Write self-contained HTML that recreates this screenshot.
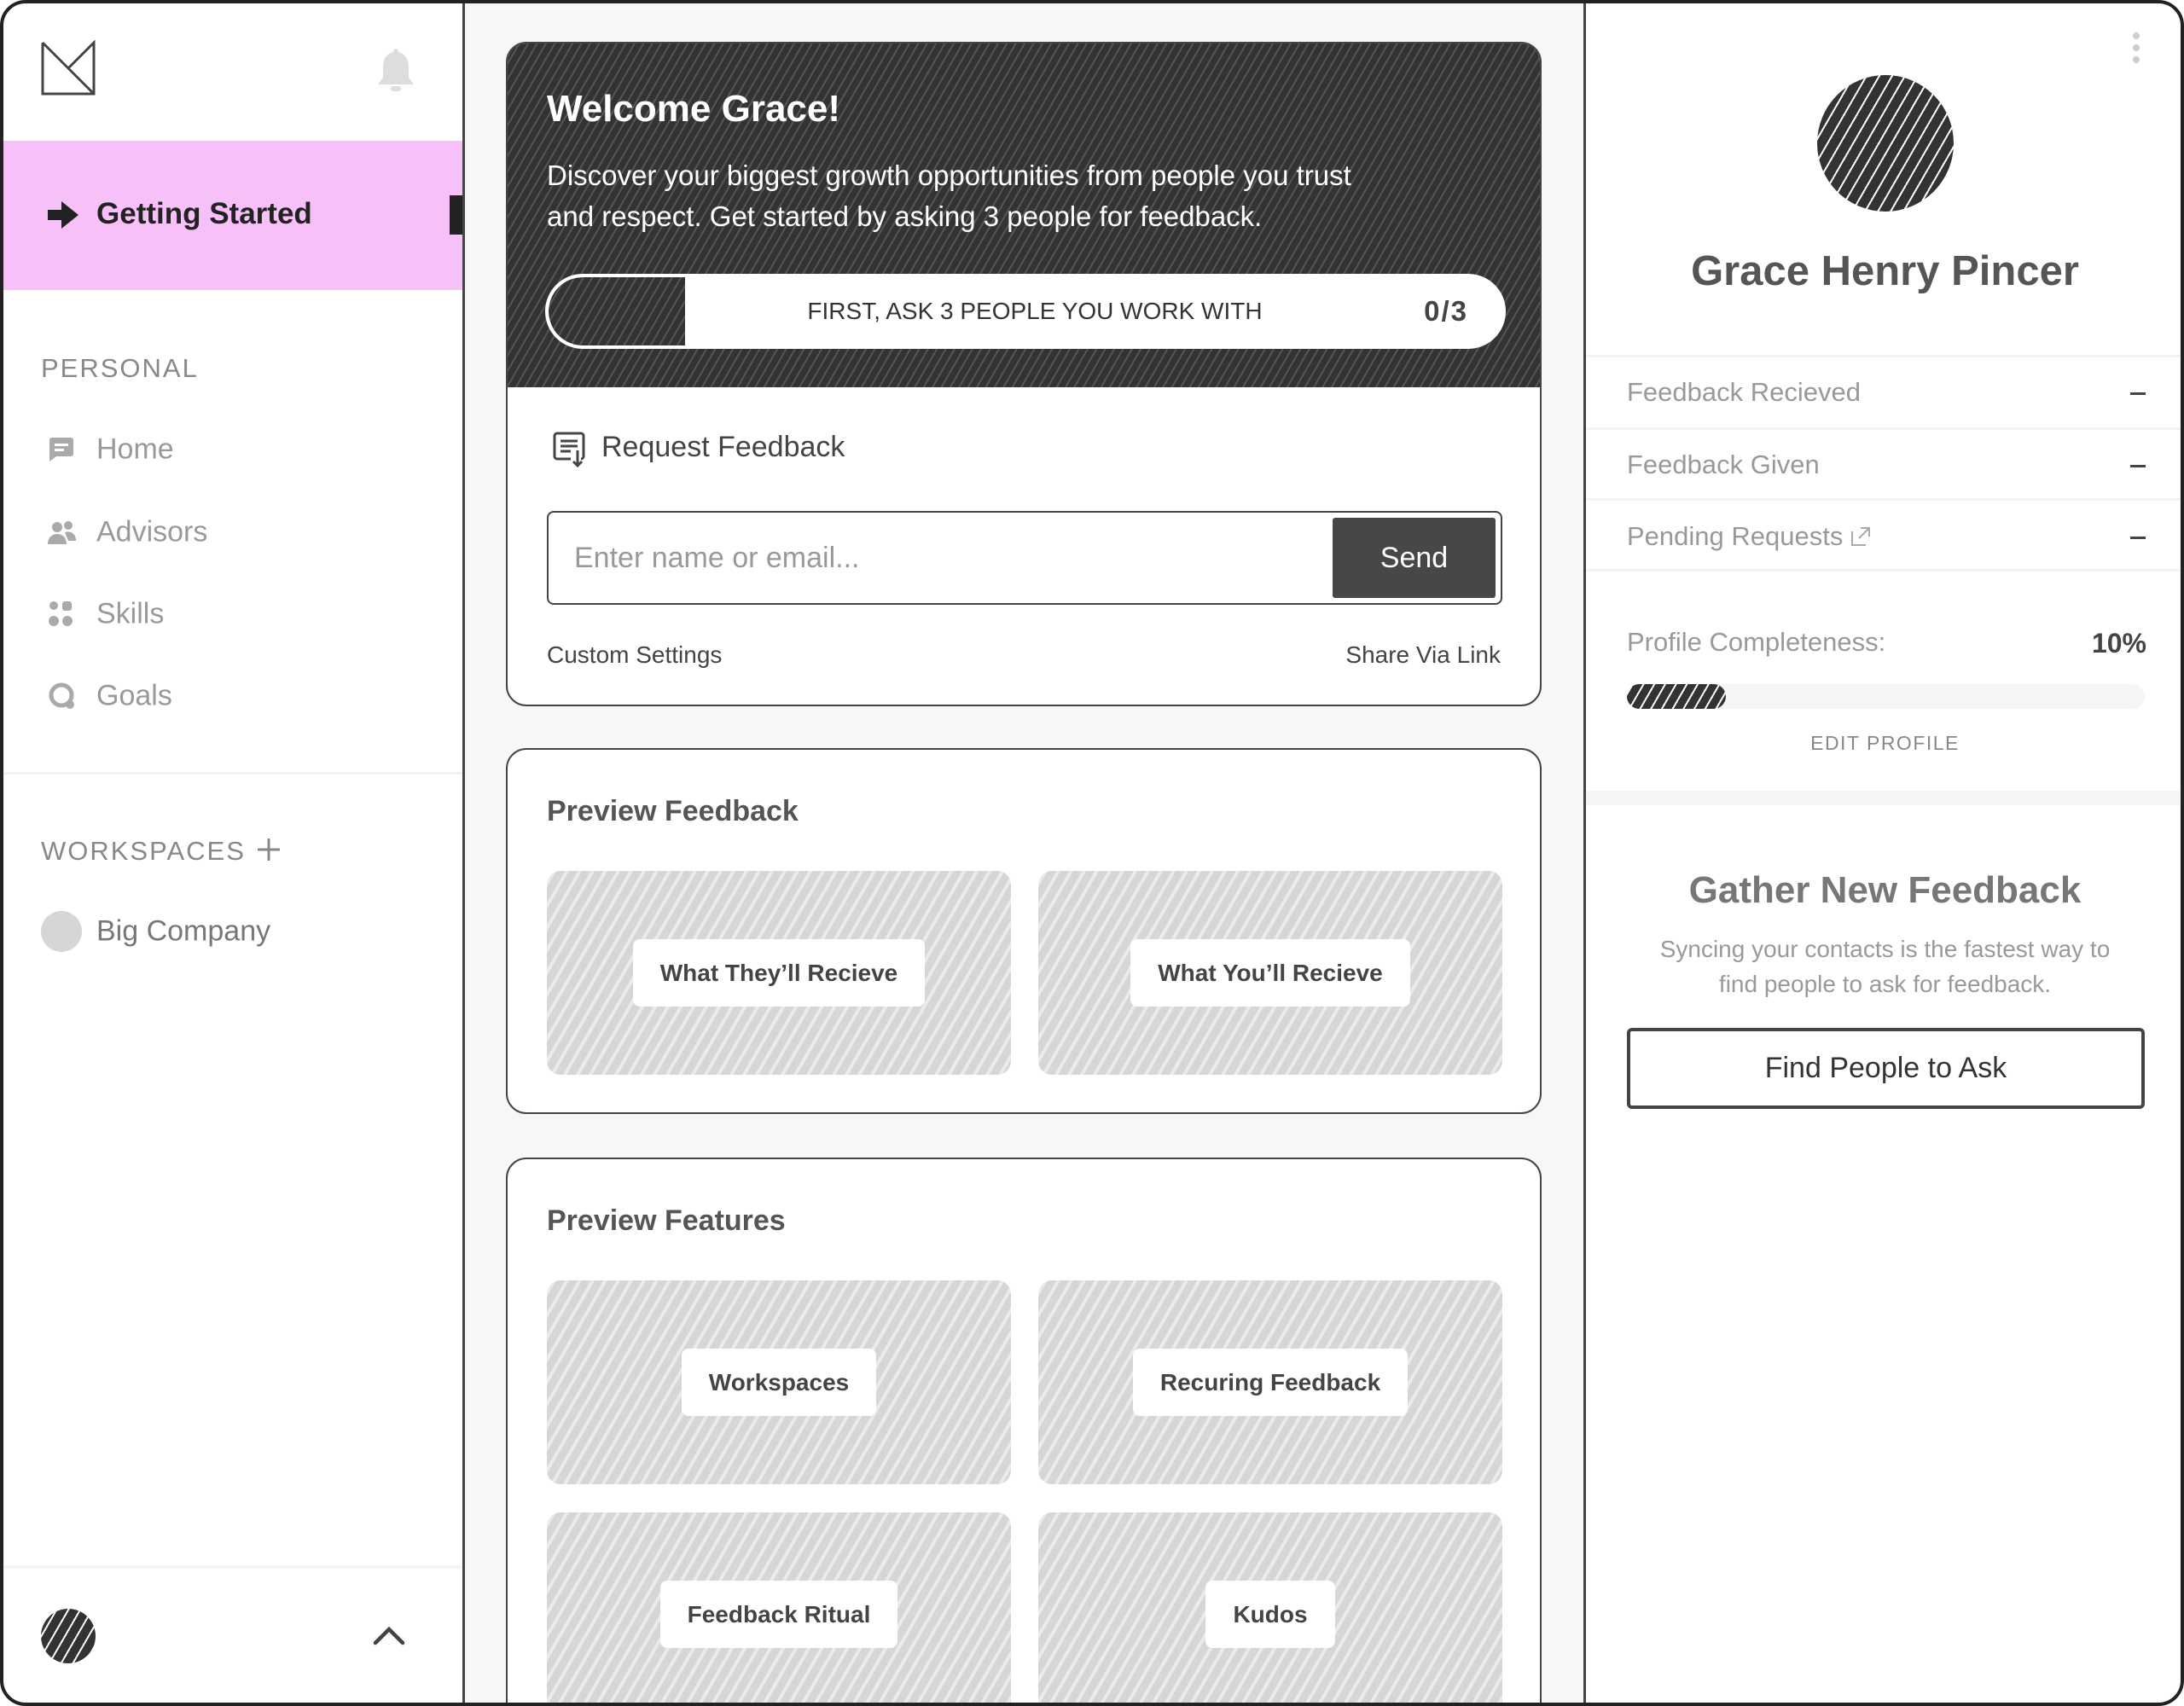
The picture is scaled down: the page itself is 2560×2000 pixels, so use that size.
<!DOCTYPE html>
<html><head><meta charset="utf-8"><style>
*{box-sizing:border-box;margin:0;padding:0}
body{width:2560px;height:2000px;overflow:hidden;background:#fff;font-family:"Liberation Sans",sans-serif}
.frame{position:absolute;left:0;top:0;width:2560px;height:2000px;border-radius:30px;overflow:hidden;background:#fff}
.border{position:absolute;left:0;top:0;width:2560px;height:2000px;border:4px solid #222;border-radius:30px;z-index:10}
.abs{position:absolute}
.side{left:0;top:0;width:545px;height:2000px;border-right:3px solid #444;background:#fff}
.mid{left:545px;top:0;width:1311px;height:2000px;background:#f7f7f7}
.right{left:1856px;top:0;width:704px;height:2000px;background:#fff;border-left:3px solid #444}
.nav{position:absolute;left:113px;font-size:34px;color:#999;transform:translateY(-50%)}
.ico{position:absolute;left:56px;transform:translateY(-50%)}
.card{position:absolute;left:48px;width:1214px;background:#fff;border:2px solid #444;border-radius:24px;overflow:hidden}
.dark{background:repeating-linear-gradient(-60deg,#333 0 7px,#555 7px 9px)}
.light{background:repeating-linear-gradient(-60deg,#d6d6d6 0 9px,#ebebeb 9px 13px)}
.tile{position:absolute;width:544px;height:239px;border-radius:16px;display:flex;align-items:center;justify-content:center}
.lab{background:#fff;border-radius:8px;font-size:28px;font-weight:bold;color:#444;padding:0 32px;height:79px;line-height:79px}
.ttl{position:absolute;left:46px;font-size:34px;font-weight:bold;color:#555}
.row{position:absolute;left:0;width:701px;border-top:3px solid #f3f3f3}
.rl{position:absolute;left:48px;font-size:31px;color:#999;transform:translateY(-50%)}
.dash{position:absolute;width:18px;height:3px;background:#444}
</style></head><body>
<div class="frame">
<div class="abs side">
 <svg class="abs" style="left:47px;top:47px" width="66" height="66" viewBox="0 0 66 66"><path d="M3 3V63H63V3L33 33M3 3L63 63" fill="none" stroke="#444" stroke-width="3"/></svg>
 <svg class="abs" style="left:440px;top:55px" width="48" height="54" viewBox="0 0 48 54"><path d="M24 2c-2 0-3 2-3 4C12 8 9 16 9 24v12L3 44h42l-6-8V24c0-8-3-16-12-18 0-2-1-4-3-4z" fill="#ddd"/><rect x="18" y="46" width="12" height="6" rx="3" fill="#ddd"/></svg>
 <div class="abs" style="left:0;top:165px;width:542px;height:175px;background:#f8c0f8"></div>
 <div class="abs" style="left:527px;top:229px;width:15px;height:46px;background:#222"></div>
 <svg class="abs" style="left:56px;top:236px" width="36" height="32" viewBox="0 0 36 32"><path d="M0 10H16V0L36 16L16 32V22H0Z" fill="#222"/></svg>
 <div class="nav" style="top:251px;color:#222;font-weight:bold;font-size:35px">Getting Started</div>
 <div class="abs" style="left:48px;top:414px;font-size:31px;color:#888;letter-spacing:2px">PERSONAL</div>
 <svg class="ico" style="top:527px" width="32" height="30" viewBox="0 0 32 30"><path d="M2 4a3 3 0 013-3h22a3 3 0 013 3v16a3 3 0 01-3 3H10l-8 6z" fill="#aaa"/><rect x="8" y="8" width="16" height="3" fill="#fff"/><rect x="8" y="14" width="11" height="3" fill="#fff"/></svg>
 <div class="nav" style="top:527px">Home</div>
 <svg class="ico" style="top:624px" width="34" height="30" viewBox="0 0 34 30"><circle cx="11" cy="9" r="6" fill="#aaa"/><circle cx="24" cy="7" r="5" fill="#aaa"/><path d="M0 29c0-8 5-12 11-12s11 4 11 12z" fill="#aaa"/><path d="M20 15c6-2 13 1 13 10h-9z" fill="#aaa"/></svg>
 <div class="nav" style="top:624px">Advisors</div>
 <svg class="ico" style="top:720px" width="30" height="32" viewBox="0 0 30 32"><circle cx="7" cy="6" r="5" fill="#aaa"/><rect x="17" y="1" width="11" height="11" rx="3" fill="#aaa"/><circle cx="7" cy="24" r="6" fill="#aaa"/><circle cx="23" cy="24" r="6" fill="#aaa"/></svg>
 <div class="nav" style="top:720px">Skills</div>
 <svg class="ico" style="top:816px" width="34" height="34" viewBox="0 0 34 34"><circle cx="16" cy="16" r="12" fill="none" stroke="#aaa" stroke-width="5"/><circle cx="26" cy="27" r="5" fill="#aaa"/></svg>
 <div class="nav" style="top:816px">Goals</div>
 <div class="abs" style="left:0;top:905px;width:542px;height:3px;background:#f3f3f3"></div>
 <div class="abs" style="left:48px;top:980px;font-size:31px;color:#888;letter-spacing:2px">WORKSPACES</div>
 <svg class="abs" style="left:300px;top:981px" width="30" height="30" viewBox="0 0 30 30"><path d="M15 2V28M2 15H28" stroke="#888" stroke-width="3"/></svg>
 <div class="abs" style="left:48px;top:1068px;width:48px;height:48px;border-radius:50%;background:#d6d6d6"></div>
 <div class="nav" style="top:1092px;color:#777">Big Company</div>
 <div class="abs" style="left:0;top:1835px;width:542px;height:4px;background:#f5f5f5"></div>
 <div class="abs" style="left:48px;top:1886px;width:64px;height:64px;border-radius:50%;background:repeating-linear-gradient(-60deg,#333 0 10px,#fff 10px 12px)"></div>
 <svg class="abs" style="left:436px;top:1904px" width="40" height="26" viewBox="0 0 40 26"><path d="M4 22L20 6L36 22" fill="none" stroke="#444" stroke-width="4.5" stroke-linecap="round"/></svg>
</div>
<div class="abs mid">
 <div class="card" style="top:49px;height:779px">
  <div class="dark abs" style="left:0;top:0;width:1214px;height:403px"></div>
  <div class="abs" style="left:46px;top:52px;font-size:44px;font-weight:bold;color:#fff">Welcome Grace!</div>
  <div class="abs" style="left:46px;top:131px;font-size:33px;color:#fff;line-height:48px;width:960px">Discover your biggest growth opportunities from people you trust and respect. Get started by asking 3 people for feedback.</div>
  <div class="abs" style="left:44px;top:270px;width:1126px;height:88px;border:4px solid #fff;border-radius:44px;background:#fff;overflow:hidden">
   <div class="abs dark" style="left:0;top:0;width:160px;height:80px;border-radius:40px 0 0 40px"></div>
   <div class="abs" style="left:0;width:1118px;top:0;line-height:80px;text-align:center;font-size:28px;color:#333;padding-left:22px">FIRST, ASK 3 PEOPLE YOU WORK WITH</div>
   <div class="abs" style="right:40px;top:0;line-height:80px;font-size:33px;font-weight:bold;color:#444;letter-spacing:2px">0/3</div>
  </div>
  <svg class="abs" style="left:52px;top:455px" width="40" height="42" viewBox="0 0 40 42"><path d="M22 32H6a3 3 0 01-3-3V5a3 3 0 013-3h28a3 3 0 013 3v24a3 3 0 01-3 3" fill="none" stroke="#444" stroke-width="3"/><path d="M10 11H30M10 17H30M10 23H22M30 22V40M25 35L30 40L35 35" fill="none" stroke="#444" stroke-width="3"/></svg>
  <div class="abs" style="left:110px;top:454px;font-size:34px;color:#444">Request Feedback</div>
  <div class="abs" style="left:46px;top:548px;width:1120px;height:110px;border:2px solid #444;border-radius:8px">
   <div class="abs" style="left:30px;top:0;line-height:106px;font-size:34px;color:#999">Enter name or email...</div>
   <div class="abs" style="right:6px;top:6px;width:191px;height:94px;background:#474747;border-radius:3px;color:#fff;font-size:34px;text-align:center;line-height:94px">Send</div>
  </div>
  <div class="abs" style="left:46px;top:701px;font-size:28px;color:#444">Custom Settings</div>
  <div class="abs" style="right:46px;top:701px;font-size:28px;color:#444">Share Via Link</div>
 </div>
 <div class="card" style="top:877px;height:429px">
  <div class="ttl" style="top:53px">Preview Feedback</div>
  <div class="tile light" style="left:46px;top:142px"><div class="lab">What They’ll Recieve</div></div>
  <div class="tile light" style="left:622px;top:142px"><div class="lab">What You’ll Recieve</div></div>
 </div>
 <div class="card" style="top:1357px;height:700px">
  <div class="ttl" style="top:53px">Preview Features</div>
  <div class="tile light" style="left:46px;top:142px"><div class="lab">Workspaces</div></div>
  <div class="tile light" style="left:622px;top:142px"><div class="lab">Recuring Feedback</div></div>
  <div class="tile light" style="left:46px;top:414px"><div class="lab">Feedback Ritual</div></div>
  <div class="tile light" style="left:622px;top:414px"><div class="lab">Kudos</div></div>
 </div>
</div>
<div class="abs right">
 <svg class="abs" style="left:638px;top:36px" width="14" height="40" viewBox="0 0 14 40"><circle cx="7" cy="6" r="4" fill="#ccc"/><circle cx="7" cy="20" r="4" fill="#ccc"/><circle cx="7" cy="34" r="4" fill="#ccc"/></svg>
 <div class="abs" style="left:271px;top:88px;width:160px;height:160px;border-radius:50%;background:repeating-linear-gradient(-60deg,#333 0 11px,#fff 11px 13px)"></div>
 <div class="abs" style="left:0;width:701px;top:290px;text-align:center;font-size:49px;font-weight:bold;color:#555">Grace Henry Pincer</div>
 <div class="row" style="top:416px"></div><div class="row" style="top:501px"></div><div class="row" style="top:584px"></div><div class="row" style="top:667px"></div>
 <div class="rl" style="top:460px">Feedback Recieved</div>
 <div class="rl" style="top:545px">Feedback Given</div>
 <div class="rl" style="top:629px">Pending Requests <svg width="24" height="24" viewBox="0 0 24 24" style="vertical-align:-2px"><path d="M2 6V22H18M10 14L22 2M12 2H22V12" fill="none" stroke="#aaa" stroke-width="2"/></svg></div>
 <div class="dash" style="left:638px;top:460px"></div><div class="dash" style="left:638px;top:545px"></div><div class="dash" style="left:638px;top:629px"></div>
 <div class="rl" style="top:753px">Profile Completeness:</div>
 <div class="abs" style="right:44px;top:736px;font-size:32px;font-weight:bold;color:#444">10%</div>
 <div class="abs" style="left:48px;top:802px;width:607px;height:29px;border-radius:15px;background:#f5f5f5"></div>
 <div class="abs" style="left:48px;top:802px;width:116px;height:29px;border-radius:15px;background:repeating-linear-gradient(-60deg,#333 0 9px,#fff 9px 11px)"></div>
 <div class="abs" style="left:0;width:701px;top:858px;text-align:center;font-size:23px;color:#888;letter-spacing:1.5px">EDIT PROFILE</div>
 <div class="abs" style="left:0;top:927px;width:701px;height:17px;background:#f5f5f5"></div>
 <div class="abs" style="left:0;width:701px;top:1019px;text-align:center;font-size:44px;font-weight:bold;color:#777">Gather New Feedback</div>
 <div class="abs" style="left:70px;width:561px;top:1092px;text-align:center;font-size:28px;color:#999;line-height:41px">Syncing your contacts is the fastest way to find people to ask for feedback.</div>
 <div class="abs" style="left:48px;top:1205px;width:607px;height:95px;border:4px solid #444;border-radius:6px;text-align:center;line-height:87px;font-size:34px;color:#333">Find People to Ask</div>
</div>
</div>
<div class="border"></div>
</body></html>
